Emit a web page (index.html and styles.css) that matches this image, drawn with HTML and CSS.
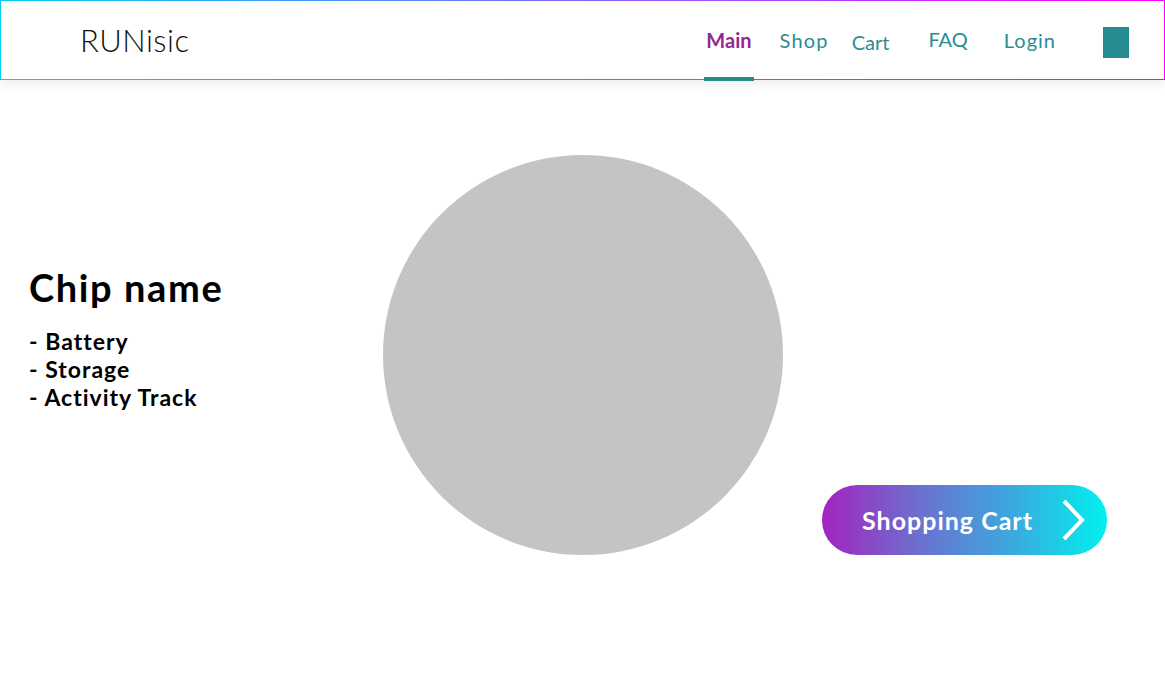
FILE: index.html
```html
<!DOCTYPE html>
<html lang="en">
<head>
<meta charset="utf-8">
<title>RUNisic</title>
<link rel="stylesheet" href="styles.css">
</head>
<body>
<header class="topbar">
  <div class="brand">RUNisic</div>
  <nav class="nav">
    <a class="nav-item active" href="#">Main</a>
    <a class="nav-item shop" href="#">Shop</a>
    <a class="nav-item cart" href="#">Cart</a>
    <a class="nav-item faq" href="#">FAQ</a>
    <a class="nav-item login" href="#">Login</a>
    <span class="nav-square"></span>
  </nav>
</header>
<main class="hero">
  <section class="info">
    <h1 class="chip-title">Chip name</h1>
    <ul class="features">
      <li>- Battery</li>
      <li>- Storage</li>
      <li>- Activity Track</li>
    </ul>
  </section>
  <div class="chip-image"></div>
  <a class="cta" href="#">
    <span class="cta-label">Shopping Cart</span>
    <svg class="cta-arrow" width="24" height="42" viewBox="0 0 24 42"><path d="M3 2 L21 21 L3 40" fill="none" stroke="#fff" stroke-width="4"/></svg>
  </a>
</main>
</body>
</html>
```

FILE: styles.css
```css
* { box-sizing: border-box; }
html, body { margin: 0; padding: 0; background: #fff; }
body {
  font-family: "Lato", "Open Sans", sans-serif;
  color: #000;
  width: 1165px;
  height: 693px;
  overflow: hidden;
}
.topbar {
  height: 80px;
  display: flex;
  align-items: center;
  justify-content: space-between;
  border: 1px solid;
  border-image: linear-gradient(90deg, #00cdf5, #ff00ff) 1;
  box-shadow: 0 4px 10px rgba(0,0,0,0.07);
  position: relative;
}
.brand {
  margin-left: 79px;
  font-size: 31px;
  font-weight: 300;
  letter-spacing: 0.5px;
  color: #111;
}
.nav {
  display: flex;
  align-items: center;
  height: 100%;
  margin-right: 35px;
}
.nav-item {
  color: #2a8c92;
  text-decoration: none;
  font-size: 20px;
  font-weight: 400;
  position: relative;
}
.nav-item.active {
  color: #93278f;
  font-weight: 700;
  padding: 0 2px;
}
.nav-item.active::after {
  content: "";
  position: absolute;
  left: 0;
  right: 0;
  bottom: -29px;
  height: 4px;
  background: #268b8f;
}
.shop { margin-left: 26px; letter-spacing: 1.2px; }
.cart { margin-left: 23px; top: 2px; }
.faq { margin-left: 39px; top: -1px; }
.login { margin-left: 36px; letter-spacing: 1px; }
.nav-square {
  width: 26px;
  height: 31px;
  background: #268c91;
  margin-left: 47px;
  margin-top: 4px;
}
.hero {
  display: flex;
  padding: 75px 0 0 29px;
}
.info {
  width: 354px;
  padding-top: 110px;
}
.chip-title {
  margin: 0 0 18px;
  font-size: 38px;
  font-weight: 700;
  letter-spacing: 1.6px;
  line-height: 44px;
}
.features {
  list-style: none;
  margin: 0;
  padding: 0;
  font-size: 23px;
  font-weight: 700;
  letter-spacing: 1px;
  line-height: 28px;
}
.chip-image {
  width: 400px;
  height: 400px;
  border-radius: 50%;
  background: #c4c4c4;
  flex: none;
}
.cta {
  align-self: flex-end;
  margin-left: 39px;
  width: 285px;
  height: 70px;
  border-radius: 35px;
  background: linear-gradient(90deg, #a324bf 0%, #6b72cf 35%, #3ea6de 65%, #00f0ee 100%);
  display: flex;
  align-items: center;
  padding-left: 40px;
  text-decoration: none;
}
.cta-label {
  color: #fff;
  font-size: 25px;
  font-weight: 700;
  letter-spacing: 1px;
}
.cta-arrow { margin-left: 28px; }
```
